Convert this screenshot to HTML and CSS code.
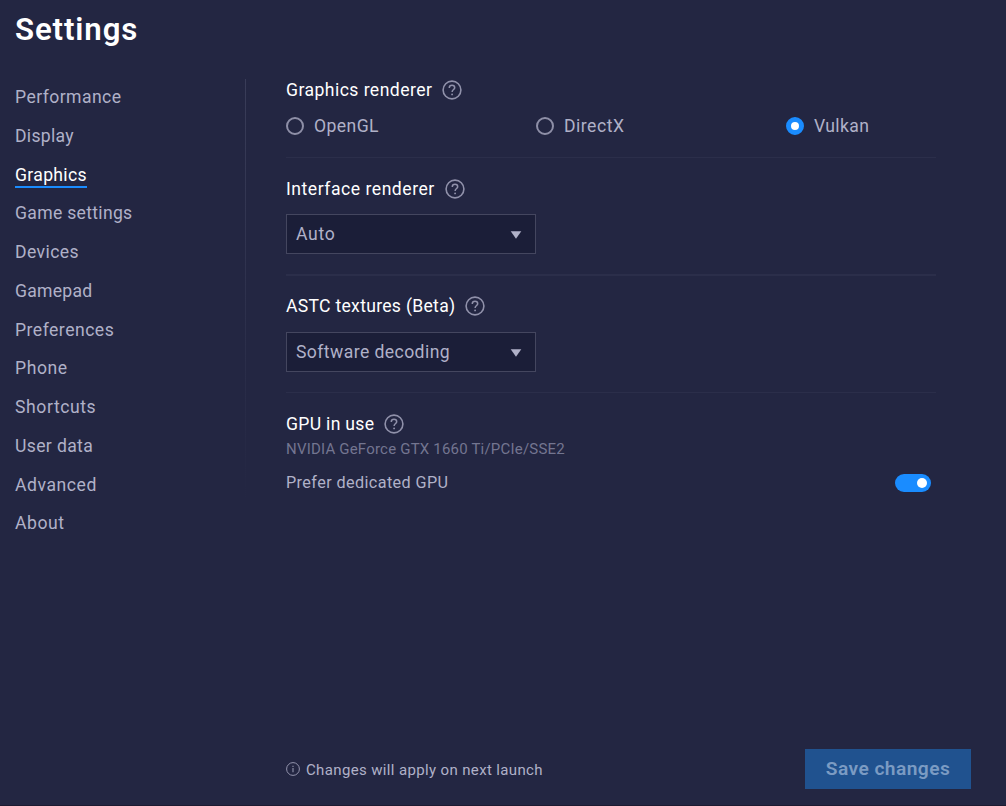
FILE: index.html
```html
<!DOCTYPE html>
<html lang="en">
<head>
<meta charset="utf-8">
<title>Settings</title>
<link rel="stylesheet" href="styles.css">
</head>
<body>
<svg width="0" height="0" class="defs">
  <symbol id="help" viewBox="0 0 20 20"><g fill="none" stroke="currentColor"><circle cx="10" cy="10" r="8.9" stroke-width="1.6"/><path d="M7.3 8.1V7.7A2.7 2.5 0 0 1 12.7 7.7C12.7 9.5 10.1 9.6 10.1 12" stroke-width="1.5"/></g><circle cx="10.1" cy="14.4" r=".95" fill="currentColor"/></symbol>
  <symbol id="arrow" viewBox="0 0 12 8"><path d="M.7.2H11.3L6 7.8Z" fill="currentColor"/></symbol>
</svg>
<div class="app">
  <h1 class="title"><span>Settings</span></h1>
  <div class="body">
    <nav class="nav">
      <a class="w-performance">Performance</a>
      <a class="w-display">Display</a>
      <a class="w-graphics active">Graphics</a>
      <a class="w-game">Game settings</a>
      <a class="w-devices">Devices</a>
      <a class="w-gamepad">Gamepad</a>
      <a class="w-preferences">Preferences</a>
      <a class="w-phone">Phone</a>
      <a class="w-shortcuts">Shortcuts</a>
      <a class="w-user">User data</a>
      <a class="w-advanced">Advanced</a>
      <a class="w-about">About</a>
    </nav>
    <main class="main">
      <section class="section">
        <h2 class="heading h-graphics"><span>Graphics renderer</span><svg class="help"><use href="#help"/></svg></h2>
        <div class="radios">
          <label class="radio"><i class="dot"></i><span class="r-opengl">OpenGL</span></label>
          <label class="radio"><i class="dot"></i><span class="r-directx">DirectX</span></label>
          <label class="radio"><i class="dot checked"></i><span class="r-vulkan">Vulkan</span></label>
        </div>
      </section>
      <section class="section heavy">
        <h2 class="heading h-interface"><span>Interface renderer</span><svg class="help"><use href="#help"/></svg></h2>
        <div class="select"><span class="s-auto">Auto</span><svg class="arrow"><use href="#arrow"/></svg></div>
      </section>
      <section class="section astc">
        <h2 class="heading h-astc"><span>ASTC textures (Beta)</span><svg class="help"><use href="#help"/></svg></h2>
        <div class="select"><span class="s-software">Software decoding</span><svg class="arrow"><use href="#arrow"/></svg></div>
      </section>
      <section class="section last">
        <h2 class="heading h-gpu"><span>GPU in use</span><svg class="help"><use href="#help"/></svg></h2>
        <p class="gpu"><span>NVIDIA GeForce GTX 1660 Ti/PCIe/SSE2</span></p>
        <div class="prefer"><span>Prefer dedicated GPU</span><i class="toggle"></i></div>
      </section>
    </main>
  </div>
  <footer class="footer">
    <div class="note"><svg class="info" viewBox="0 0 14 14"><circle cx="7" cy="7" r="6.4" fill="none" stroke="currentColor"/><path d="M7 3.7V4.9M7 6V10.2" stroke="currentColor" stroke-width="1.1"/></svg><span>Changes will apply on next launch</span></div>
    <button class="save"><span>Save changes</span></button>
  </footer>
</div>
</body>
</html>
```

FILE: styles.css
```css
* { box-sizing: border-box; margin: 0; padding: 0; }
body { background: #232642; color: #b0b1c8; font: 17.6px/20px Roboto, "Liberation Sans", sans-serif; }
.defs { display: block; height: 0; }
.app { height: 806px; display: flex; flex-direction: column; border-bottom: 1px solid #1d1b31; }
.title { height: 79px; padding: 10px 15px; color: #fff; font-size: 31.2px; line-height: 40px; font-weight: 600; letter-spacing: .9px; }
.body { flex: 1; display: flex; align-items: flex-start; }
.nav { width: 246px; margin-right: 40px; padding: 3px 0 0 15px; display: flex; flex-direction: column; align-items: flex-start;
  background: linear-gradient(#393c58, #232642 420px) right top / 1px 420px no-repeat; }
.nav a { height: 28px; margin-bottom: 10.77px; line-height: 30px; white-space: nowrap; }
.nav .active { color: #fff; border-bottom: 2px solid #1a8cff; }
.w-performance { letter-spacing: .42px; }
.w-display { letter-spacing: .3px; }
.w-graphics { letter-spacing: .32px; }
.w-game { letter-spacing: .3px; }
.w-devices { letter-spacing: .4px; }
.w-gamepad { letter-spacing: .25px; }
.w-preferences { letter-spacing: .48px; }
.w-phone, .w-about { letter-spacing: .56px; }
.w-shortcuts { letter-spacing: .58px; }
.w-user { letter-spacing: .35px; }
.w-advanced { letter-spacing: .54px; }
.main { width: 650px; padding-top: 1px; }
.section { border-bottom: 1px solid #2b2e4a; padding-bottom: 20px; margin-bottom: 21px; }
.section.heavy { border-bottom-width: 2px; margin-bottom: 20px; }
.section.last { border: 0; }
.heading { display: flex; align-items: center; height: 20px; gap: 9.7px; color: #fff; font-size: 17.6px; font-weight: 400; white-space: nowrap; }
.h-graphics { letter-spacing: .44px; }
.h-interface { letter-spacing: .52px; }
.h-astc { letter-spacing: .29px; }
.h-gpu { letter-spacing: .3px; }
.help { width: 20px; height: 20px; color: #9091aa; }
.radios { display: grid; grid-template-columns: repeat(3, 250px); margin-top: 16px; padding-bottom: 1px; }
.radio { display: flex; align-items: center; gap: 10px; height: 20px; }
.r-opengl { letter-spacing: .4px; }
.r-directx { letter-spacing: .5px; }
.r-vulkan { letter-spacing: .35px; }
.dot { width: 18px; height: 18px; border: 2px solid #8e8fa7; border-radius: 50%; }
.dot.checked { border: 5px solid #1a8cff; background: #fff; }
.select { width: 250px; height: 40px; margin-top: 15px; padding: 0 13px 0 9px; display: flex; align-items: center; justify-content: space-between; background: #1b1e38; border: 1px solid #44465f; }
.astc .select { margin-top: 16px; }
.s-auto { letter-spacing: .7px; }
.s-software { letter-spacing: .42px; }
.arrow { width: 12px; height: 8px; margin-top: 2px; color: #b0b1c8; }
.gpu { margin-top: 5px; font-size: 15px; color: #737590; letter-spacing: .2px; }
.prefer { display: flex; align-items: center; justify-content: space-between; padding-right: 5px; margin-top: 14px; font-size: 16.2px; letter-spacing: .4px; }
.toggle { width: 36px; height: 18px; padding: 4px 4px 4px 22px; border-radius: 9px; background: #1a8cff; }
.toggle::before { content: ""; display: block; width: 10px; height: 10px; border-radius: 50%; background: #fff; }
.footer { height: 56px; padding: 0 35px 0 286px; display: flex; align-items: flex-start; justify-content: space-between; }
.note { height: 40px; display: flex; align-items: center; gap: 6px; font-size: 15px; letter-spacing: .36px; }
.note span { padding-top: 2px; }
.info { width: 14px; height: 14px; color: #9394ad; }
.save { width: 166px; height: 40px; background: #20528f; border: 0; color: #7b9bc3; font: 600 19.2px/40px Roboto, sans-serif; letter-spacing: .42px; }
```
